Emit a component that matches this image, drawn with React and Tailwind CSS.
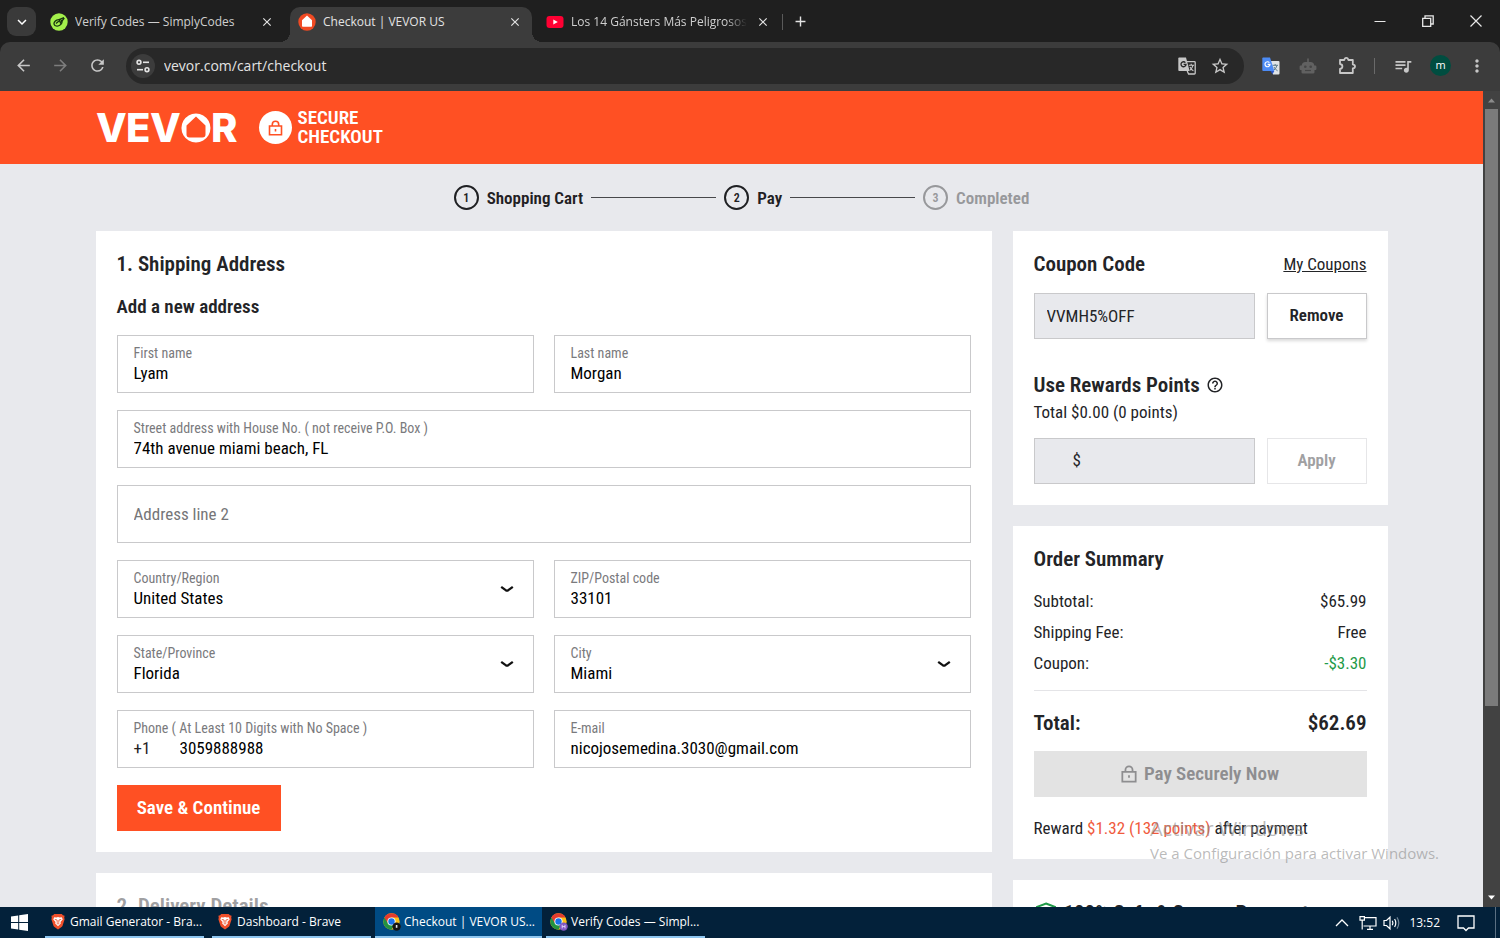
import React from "react";
import {
  MdArrowBack, MdArrowForward, MdRefresh, MdStarOutline,
  MdQueueMusic, MdMoreVert, MdClose, MdAdd, MdHelpOutline, MdKeyboardArrowDown,
} from "react-icons/md";

const UI = "font-['Open_Sans','Noto_Sans',sans-serif]";
const SHOP = "font-['Roboto_Condensed','Liberation_Sans_Narrow','Roboto',sans-serif]";

/* ---------- icons ---------- */
function SimplyIcon() {
  return (
    <svg viewBox="0 0 18 18" className="size-[18px] shrink-0" aria-hidden="true">
      <circle cx="9" cy="9" r="8.7" fill="#a3f04b" />
      <g fill="none" stroke="#17330f" strokeWidth="1.3">
        <ellipse cx="8" cy="9.8" rx="4.2" ry="3" transform="rotate(-25 8 9.8)" />
        <path d="M6 10.5 L9.5 7.5 L10.5 10 L14.3 5 M9 6.5 L14 4.6" />
      </g>
    </svg>
  );
}
function HouseIcon() {
  return (
    <svg viewBox="0 0 18 18" className="size-[18px] shrink-0" aria-hidden="true">
      <circle cx="9" cy="9" r="8.7" fill="#f04a23" />
      <path d="M9 2.6 L14 7.2 V13 Q14 13.8 13.2 13.8 H4.8 Q4 13.8 4 13 V7.2 Z" fill="#fff" />
    </svg>
  );
}
function YoutubeIcon() {
  return (
    <svg viewBox="0 0 18 18" className="size-[18px] shrink-0" aria-hidden="true">
      <rect x="0.5" y="3" width="17" height="12" rx="3" fill="#ff0033" />
      <path d="M7.3 6.4 L11.8 9 L7.3 11.6 Z" fill="#fff" />
    </svg>
  );
}
function TuneIcon() {
  return (
    <svg viewBox="0 0 16 16" className="size-4" fill="none" stroke="#e3e3e3" strokeWidth="1.6" aria-hidden="true">
      <circle cx="4" cy="4.3" r="1.9" /><path d="M8 4.3 H14" />
      <circle cx="12" cy="11.7" r="1.9" /><path d="M2 11.7 H8" />
    </svg>
  );
}
function TranslateColor() {
  return (
    <svg viewBox="0 0 18 18" className="size-[18px]" aria-hidden="true">
      <path d="M8 4 H16.5 Q17.5 4 17.5 5 V16.5 Q17.5 17.5 16.5 17.5 H11 Z" fill="#dfe3e6" />
      <path d="M10.5 8.3 H16 M13.2 7 V8.3 M15 8.5 Q14.2 11.5 11.5 13.5 M12 10 Q13 12.5 15.6 13.8" stroke="#5d7c8c" strokeWidth="1" fill="none" />
      <path d="M1.2 0.5 H8 L12.3 14 H1.2 Q0.3 14 0.3 13 V1.4 Q0.3 0.5 1.2 0.5 Z" fill="#4c8bf5" />
      <path d="M8.5 14 H12.3 L10.5 17.3 Z" fill="#2a56c6" />
      <path d="M7.4 5.6 A2.5 2.5 0 1 0 8 7.4 H5.6" stroke="#fff" strokeWidth="1.2" fill="none" />
    </svg>
  );
}
function TranslateMono() {
  return (
    <svg viewBox="0 0 18 18" className="size-[18px]" aria-hidden="true">
      <path d="M9 4.6 H16.4 Q17.2 4.6 17.2 5.4 V16.2 Q17.2 17 16.4 17 H10.6 L9.2 14" stroke="#c7c7c7" strokeWidth="1.3" fill="none" />
      <path d="M10.8 8.2 H16 M13.2 6.8 V8.2 M15 8.4 Q14.2 11.5 11.8 13.4 M12 10 Q13 12.5 15.4 13.8" stroke="#c7c7c7" strokeWidth="1.1" fill="none" />
      <path d="M1.2 0.5 H8 L11.6 14 H1.2 Q0.3 14 0.3 13 V1.4 Q0.3 0.5 1.2 0.5 Z" fill="#c7c7c7" />
      <path d="M7.4 5.6 A2.5 2.5 0 1 0 8 7.4 H5.6" stroke="#282828" strokeWidth="1.3" fill="none" />
    </svg>
  );
}
function RobotIcon() {
  return (
    <svg viewBox="0 0 18 18" className="size-[18px]" aria-hidden="true">
      <path d="M8.2 1.5 H9.8 V5 H11.5 Q15 5 15.3 8.6 H16.4 Q17.4 8.6 17.4 9.6 V12 Q17.4 13 16.4 13 H15.5 V15.2 Q15.5 16.5 14.2 16.5 H3.8 Q2.5 16.5 2.5 15.2 V13 H1.6 Q0.6 13 0.6 12 V9.6 Q0.6 8.6 1.6 8.6 H2.7 Q3 5 6.5 5 H8.2 Z" fill="#616161" />
      <circle cx="6.3" cy="9.8" r="1.3" fill="#454545" />
      <circle cx="11.7" cy="9.8" r="1.3" fill="#454545" />
      <path d="M6 13.5 H12" stroke="#454545" strokeWidth="1.2" />
    </svg>
  );
}
function PuzzleIcon() {
  return (
    <svg viewBox="0 0 20 20" className="size-5" fill="none" stroke="#c7c7c7" strokeWidth="1.8" strokeLinejoin="round" aria-hidden="true">
      <path d="M3 4 H7.3 Q7.6 1.8 9.3 1.8 Q11 1.8 11.3 4 H15.8 V8.4 Q18 8.8 18 10.4 Q18 12 15.8 12.4 V17 H3 V13 Q5.4 12.6 5.4 10.5 Q5.4 8.4 3 8 Z" />
    </svg>
  );
}
function BraveIcon() {
  return (
    <svg viewBox="0 0 16 18" className="h-[17px] w-[18px] shrink-0" aria-hidden="true">
      <path d="M4 1 H12 L13.2 2.5 L15 2.8 L14.6 5 L15 6.5 L12.8 13.5 Q12.3 14.8 8 17.4 Q3.7 14.8 3.2 13.5 L1 6.5 L1.4 5 L1 2.8 L2.8 2.5 Z" fill="#f0502b" />
      <path d="M4 4.4 L6.2 4.8 L8 4.3 L9.8 4.8 L12 4.4 L13 6.8 L10.6 9.6 L11 11 L8 14 L5 11 L5.4 9.6 L3 6.8 Z" fill="#fff" />
      <path d="M4.6 6.8 L7 7.4 L7.2 10.4 M11.4 6.8 L9 7.4 L8.8 10.4 M6.6 11.4 H9.4" stroke="#f0502b" strokeWidth="0.9" fill="none" />
    </svg>
  );
}
function ChromeIcon({ badge, letter }) {
  return (
    <svg viewBox="0 0 18 18" className="size-[18px] shrink-0" aria-hidden="true">
      <circle cx="8.5" cy="8.5" r="8.2" fill="#fbc116" />
      <path d="M8.5 8.5 L1.4 4.4 A8.2 8.2 0 0 0 8.5 16.7 L11.9 10.4 Z" fill="#229342" />
      <path d="M8.5 0.3 A8.2 8.2 0 0 1 15.6 4.4 H8.5 L5.1 10.4 L1.4 4.4 A8.2 8.2 0 0 1 8.5 0.3 Z" fill="#e33b2e" />
      <circle cx="8.5" cy="8.5" r="4.1" fill="#fff" />
      <circle cx="8.5" cy="8.5" r="3.2" fill="#1a73e8" />
      <circle cx="13.6" cy="13.6" r="4.2" fill={badge} />
      {letter ? (
        <path d="M12.2 11.8 V15.4 M15 11.8 V15.4 M12.2 13.6 H15" stroke="#e9dcff" strokeWidth="0.9" />
      ) : (
        <path d="M13.6 12 V14.8" stroke="#e8e8e8" strokeWidth="1.6" />
      )}
    </svg>
  );
}
function LockIcon({ className }) {
  return (
    <svg viewBox="0 0 18 20" className={className} fill="none" stroke="currentColor" strokeWidth="2" aria-hidden="true">
      <path d="M1.5 7.5 H16.5 V18.5 H1.5 Z M5 7.5 V5.5 A4 4 0 0 1 13 5.5 V7.5 M9 11.3 V14.3" />
    </svg>
  );
}
function VevorLogo() {
  return (
    <svg viewBox="0 0 144 32" className="h-8 w-36 overflow-visible" role="img" aria-label="VEVOR">
      <g fill="#fff" fontFamily="Inter, sans-serif" fontWeight="800" fontSize="40">
        <text x="0" y="30">V</text>
        <text x="30" y="30">E</text>
        <text x="54" y="30">V</text>
        <text x="115" y="30">R</text>
      </g>
      <path fillRule="evenodd" fill="#fff" d="M100 1.5 A14.5 14.5 0 1 1 99.9 1.5 Z M100 4.5 L90.5 13.5 V22.5 Q90.5 25.5 93.5 25.5 H106.5 Q109.5 25.5 109.5 22.5 V13.5 Z" />
    </svg>
  );
}

/* ---------- browser chrome ---------- */
function Tab({ icon, title, active, fade }) {
  return (
    <div className={`relative flex h-[35px] w-[242px] items-center gap-[7px] px-2 pb-[5px] ${active ? "rounded-t-[10px] bg-[#3c3c3c]" : ""}`}>
      {active && (
        <>
          <span className="absolute bottom-0 -left-2.5 size-2.5 bg-[radial-gradient(circle_at_0_0,transparent_10px,#3c3c3c_10px)]" />
          <span className="absolute -right-2.5 bottom-0 size-2.5 bg-[radial-gradient(circle_at_100%_0,transparent_10px,#3c3c3c_10px)]" />
        </>
      )}
      {icon}
      <span className={`flex-1 overflow-hidden text-[12px] leading-5 whitespace-nowrap ${active ? "text-[#e3e3e3]" : "text-[#cfcfcf]"} ${fade ? "[mask-image:linear-gradient(to_right,#000_88%,transparent)]" : ""}`}>
        {title}
      </span>
      <button aria-label="Close tab" className="flex size-[18px] items-center justify-center text-[#e3e3e3]"><MdClose size={14} /></button>
    </div>
  );
}

function TabStrip() {
  return (
    <div className="flex h-[42px] shrink-0 items-end bg-[#1f1f1f]">
      <button aria-label="Search tabs" className="mb-1.5 ml-[7px] flex size-[29px] items-center justify-center rounded-[9px] bg-[#3a3a3a] text-white"><MdKeyboardArrowDown size={18} /></button>
      <div className="ml-1.5 flex gap-1.5">
        <Tab icon={<SimplyIcon />} title="Verify Codes — SimplyCodes" />
        <Tab icon={<HouseIcon />} title="Checkout | VEVOR US" active />
        <Tab icon={<YoutubeIcon />} title="Los 14 Gánsters Más Peligrosos" fade />
      </div>
      <span className="mb-3 ml-0.5 h-4 w-px bg-[#5a5a5a]" />
      <button aria-label="New tab" className="mb-[11px] ml-[7px] flex size-5 items-center justify-center text-[#e3e3e3]"><MdAdd size={17} /></button>
      <div className="ml-auto flex h-full items-center text-[#e8e8e8]">
        <button aria-label="Minimize" className="flex w-12 justify-center"><svg viewBox="0 0 12 12" className="size-3" stroke="currentColor"><path d="M0.5 6.5 H11.5" /></svg></button>
        <button aria-label="Restore" className="flex w-12 justify-center"><svg viewBox="0 0 12 12" className="size-3" stroke="currentColor" fill="none" strokeWidth="1.3"><path d="M0.7 3.3 H8.7 V11.3 H0.7 Z M3 3 V0.9 H11.2 V9 H9" /></svg></button>
        <button aria-label="Close" className="flex w-12 justify-center"><svg viewBox="0 0 12 12" className="size-3" stroke="currentColor" strokeWidth="1.2"><path d="M0.5 0.5 L11.5 11.5 M11.5 0.5 L0.5 11.5" /></svg></button>
      </div>
    </div>
  );
}

function Toolbar() {
  return (
    <div className="bg-[#1f1f1f]">
      <div className="flex h-[49px] shrink-0 items-center rounded-t-[10px] bg-[#3c3c3c] pr-[13px] pb-0.5 pl-3.5 text-[#c7c7c7]">
        <div className="flex w-28 gap-[18px]">
          <button aria-label="Back"><MdArrowBack size={19} /></button>
          <button aria-label="Forward" className="text-[#7d7d7d]"><MdArrowForward size={19} /></button>
          <button aria-label="Reload"><MdRefresh size={19} /></button>
        </div>
        <div className="flex h-9 flex-1 items-center rounded-full bg-[#282828] pr-3.5 pl-[5px]">
          <button aria-label="Site information" className="flex size-6 items-center justify-center rounded-full bg-[#3c3c3c]"><TuneIcon /></button>
          <input aria-label="Address" readOnly value="vevor.com/cart/checkout" className="ml-[9px] min-w-0 flex-1 bg-transparent text-[14px] text-[#e3e3e3] outline-none" />
          <button aria-label="Translate page"><TranslateMono /></button>
          <button aria-label="Bookmark" className="ml-3.5"><MdStarOutline size={20} /></button>
        </div>
        <div className="ml-[18px] flex items-center">
          <button aria-label="Google Translate" className="mr-[19px]"><TranslateColor /></button>
          <button aria-label="Extension" className="mr-5"><RobotIcon /></button>
          <button aria-label="Extensions" className="mr-[17px]"><PuzzleIcon /></button>
          <span className="mr-[18px] h-4 w-px bg-[#6a6a6a]" />
          <button aria-label="Media" className="mr-[17px]"><MdQueueMusic size={20} /></button>
          <button aria-label="Profile" className="mr-4 flex size-[21px] items-center justify-center rounded-full bg-[#004d40] text-[11px] text-white">m</button>
          <button aria-label="Menu"><MdMoreVert size={20} /></button>
        </div>
      </div>
    </div>
  );
}

/* ---------- shop ---------- */
function Step({ n, label, muted }) {
  return (
    <div className={`flex items-center gap-2 ${muted ? "text-[#97989b]" : "text-[#1f2023]"}`}>
      <span className="flex size-[25px] items-center justify-center rounded-full border-2 border-current text-[12px] font-semibold">{n}</span>
      <span className="text-[17px] leading-[22px] font-semibold">{label}</span>
    </div>
  );
}

function Field({ id, label, value, prefix, wide }) {
  return (
    <div className={`flex h-[58px] flex-col justify-center border border-[#c9c9cb] px-4 ${wide ? "col-span-2" : ""}`}>
      <label htmlFor={id} className="text-[14px] leading-[18px] text-[#7a7a7d]">{label}</label>
      <div className="flex text-[17px] leading-[23px]">
        {prefix && <span className="w-[46px] text-[#1f2023]">{prefix}</span>}
        <input id={id} defaultValue={value} className="min-w-0 flex-1 bg-transparent text-black outline-none" />
      </div>
    </div>
  );
}

function SelectField({ id, label, value }) {
  return (
    <div className="grid h-[58px] grid-cols-[1fr_auto] items-center border border-[#c9c9cb] pr-[18px] pl-4">
      <div className="flex flex-col">
        <label htmlFor={id} className="text-[14px] leading-[18px] text-[#7a7a7d]">{label}</label>
        <select id={id} defaultValue={value} className="appearance-none bg-transparent text-[17px] leading-[23px] text-black outline-none"><option>{value}</option></select>
      </div>
      <svg viewBox="0 0 16 16" className="size-4" fill="none" stroke="#111" strokeWidth="2.3" aria-hidden="true"><path d="M2.2 5.8 L7 9.4 Q8 10 9 9.4 L13.8 5.8" /></svg>
    </div>
  );
}

function SummaryRow({ label, value, className }) {
  return (
    <div className="flex justify-between text-[17px] leading-6">
      <span>{label}</span>
      <span className={className}>{value}</span>
    </div>
  );
}

function ShippingCard() {
  return (
    <section className="bg-white p-[21px]">
      <h2 className="text-[21px] leading-6 font-semibold">1. Shipping Address</h2>
      <h3 className="mt-[17px] text-[19px] leading-7 font-semibold">Add a new address</h3>
      <form className="mt-3.5" onSubmit={(e) => e.preventDefault()}>
        <div className="grid grid-cols-2 gap-x-5 gap-y-[17px]">
          <Field id="first" label="First name" value="Lyam" />
          <Field id="last" label="Last name" value="Morgan" />
          <Field id="street" label="Street address with House No. ( not receive P.O. Box )" value="74th avenue miami beach, FL" wide />
          <input aria-label="Address line 2" placeholder="Address line 2" className="col-span-2 h-[58px] border border-[#c9c9cb] px-4 text-[17px] outline-none placeholder:text-[#757578]" />
          <SelectField id="country" label="Country/Region" value="United States" />
          <Field id="zip" label="ZIP/Postal code" value="33101" />
          <SelectField id="state" label="State/Province" value="Florida" />
          <SelectField id="city" label="City" value="Miami" />
          <Field id="phone" label="Phone ( At Least 10 Digits with No Space )" value="3059888988" prefix="+1" />
          <Field id="email" label="E-mail" value="nicojosemedina.3030@gmail.com" />
        </div>
        <button className="mt-[17px] h-[46px] w-[164px] bg-[#ff5023] text-[19px] leading-6 font-semibold text-white">Save &amp; Continue</button>
      </form>
    </section>
  );
}

function CouponCard() {
  return (
    <section className="bg-white p-[21px]">
      <div className="flex items-center justify-between leading-6">
        <h2 className="text-[21px] font-semibold">Coupon Code</h2>
        <a href="#coupons" className="text-[17px] leading-[22px] underline">My Coupons</a>
      </div>
      <div className="mt-[17px] flex gap-3">
        <input aria-label="Coupon code" defaultValue="VVMH5%OFF" className="h-[46px] min-w-0 flex-1 border border-[#c9c9cb] bg-[#e8e9ed] px-3 text-[17px] outline-none" />
        <button className="w-[100px] border border-[#c9c9cb] text-[17px] font-semibold shadow-[0_2px_3px_rgba(0,0,0,0.15)]">Remove</button>
      </div>
      <div className="mt-[34px] flex items-center gap-1.5">
        <h2 className="text-[21px] leading-6 font-semibold">Use Rewards Points</h2>
        <MdHelpOutline size={18} />
      </div>
      <p className="mt-[3px] text-[17px] leading-6">Total $0.00 (0 points)</p>
      <div className="mt-3.5 flex gap-3">
        <label className="flex h-[46px] min-w-0 flex-1 items-center border border-[#c9c9cb] bg-[#e8e9ed] pl-[38px] text-[17px]">
          $<input aria-label="Reward amount" className="min-w-0 flex-1 bg-transparent outline-none" />
        </label>
        <button disabled className="w-[100px] border border-[#e6e6e8] text-[17px] font-semibold text-[#a0a0a2]">Apply</button>
      </div>
    </section>
  );
}

function OrderCard() {
  return (
    <section className="bg-white p-[21px] pb-[19px]">
      <h2 className="text-[21px] leading-6 font-semibold">Order Summary</h2>
      <div className="mt-[18px] flex flex-col gap-[7px] border-b border-[#e4e4e7] pb-[15px]">
        <SummaryRow label="Subtotal:" value="$65.99" />
        <SummaryRow label="Shipping Fee:" value="Free" />
        <SummaryRow label="Coupon:" value="-$3.30" className="text-[#1f9a48]" />
      </div>
      <div className="mt-5 flex justify-between text-[21px] leading-6 font-semibold">
        <span>Total:</span>
        <span>$62.69</span>
      </div>
      <button disabled className="mt-4 flex h-[46px] w-full items-center justify-center gap-[7px] bg-[#e3e3e3] text-[19px] leading-6 font-semibold text-[#8e8e90]">
        <LockIcon className="h-[18px] w-4" />Pay Securely Now
      </button>
      <p className="mt-[19px] text-[17px] leading-6">Reward <span className="text-[#f05a3c]">$1.32 (132 points)</span> after payment</p>
    </section>
  );
}

function Shop() {
  return (
    <main className={`min-w-0 flex-1 overflow-hidden bg-[#e8e9ed] text-[#232427] ${SHOP}`}>
      <header className="flex h-[73px] justify-center bg-[#ff5023]">
        <div className="flex w-full max-w-[1292px] items-center">
          <VevorLogo />
          <span className="ml-[19px] flex size-[33px] items-center justify-center rounded-full bg-white text-[#ff5023]"><LockIcon className="h-4 w-[15px]" /></span>
          <p className="ml-1.5 pb-0.5 text-[19px] leading-[19px] font-semibold text-white">SECURE<br />CHECKOUT</p>
        </div>
      </header>
      <nav className="flex h-[67px] items-center justify-center gap-2">
        <Step n="1" label="Shopping Cart" />
        <span className="h-px w-[125px] bg-[#47484b]" />
        <Step n="2" label="Pay" />
        <span className="h-px w-[125px] bg-[#47484b]" />
        <Step n="3" label="Completed" muted />
      </nav>
      <div className="mx-auto grid max-w-[1292px] grid-cols-[minmax(0,1fr)_375px] gap-[21px]">
        <div className="flex flex-col gap-[21px]">
          <ShippingCard />
          <section className="bg-white p-[21px]"><h2 className="text-[21px] leading-6 font-semibold text-[#a0a0a2]">2. Delivery Details</h2></section>
        </div>
        <div className="flex flex-col gap-[21px]">
          <CouponCard />
          <OrderCard />
          <section className="flex items-center gap-1.5 bg-white p-[21px]">
            <svg viewBox="0 0 24 24" className="size-6" fill="none" stroke="#1f9a48" strokeWidth="2" aria-hidden="true"><path d="M12 2.5 L21 6 V12 Q21 19 12 22.5 Q3 19 3 12 V6 Z M8 12 L11 15 L16 9" /></svg>
            <h2 className="text-[21px] leading-6 font-semibold">100% Safe &amp; Secure Payments</h2>
          </section>
        </div>
      </div>
    </main>
  );
}

function Scrollbar() {
  return (
    <div className="flex w-[17px] shrink-0 flex-col items-center bg-[#424242]" aria-hidden="true">
      <svg viewBox="0 0 17 18" className="h-[18px] w-[17px]"><path d="M5 11.5 L8.5 7.5 L12 11.5 Z" fill="#8b8b8b" /></svg>
      <div className="w-[13px] flex-[597] bg-[#7b7b7b]" />
      <div className="flex-[183]" />
      <svg viewBox="0 0 17 18" className="h-[18px] w-[17px]"><path d="M5 6.5 H12 L8.5 10.5 Z" fill="#fff" /></svg>
    </div>
  );
}

/* ---------- taskbar ---------- */
function Task({ icon, title, active }) {
  return (
    <button className={`flex h-full w-[167px] flex-col items-stretch text-left text-white ${active ? "bg-[#004b84]" : "px-1"}`}>
      <span className={`flex flex-1 items-center gap-[3px] ${active ? "px-2" : "px-1"}`}>
        {icon}
        <span className="text-[12px] leading-5 whitespace-nowrap">{title}</span>
      </span>
      <span className="h-0.5 bg-[#8ec6f0]" />
    </button>
  );
}

function Taskbar() {
  return (
    <footer className="flex h-[31px] shrink-0 items-center bg-[#03213a] text-white">
      <button aria-label="Start" className="flex w-[41px] justify-center pr-[3px]">
        <svg viewBox="0 0 17 17" className="size-[17px]" fill="#fff"><path d="M0 2.4 L7.2 1.4 V8 H0 Z M8.2 1.2 L17 0 V8 H8.2 Z M0 9 H7.2 V15.6 L0 14.6 Z M8.2 9 H17 V17 L8.2 15.8 Z" /></svg>
      </button>
      <Task icon={<BraveIcon />} title="Gmail Generator - Bra..." />
      <Task icon={<BraveIcon />} title="Dashboard - Brave" />
      <Task icon={<ChromeIcon badge="#151515" />} title="Checkout | VEVOR US..." active />
      <Task icon={<ChromeIcon badge="#7e57c2" letter />} title="Verify Codes — Simpl..." />
      <div className="ml-auto flex h-full items-center">
        <svg viewBox="0 0 14 14" className="size-3.5" fill="none" stroke="#fff" strokeWidth="1.3" aria-hidden="true"><path d="M1 10 L7 4 L13 10" /></svg>
        <svg viewBox="0 0 18 16" className="ml-2.5 h-4 w-[18px]" fill="none" stroke="#fff" strokeWidth="1.2" aria-hidden="true"><path d="M6 2.6 H17 V11 H4.5 M11 11 V14.4 M8 14.4 H14 M1 1.6 H5.4 V5.2 H1 Z M3.2 5.2 V14.5" /></svg>
        <svg viewBox="0 0 18 16" className="ml-1.5 h-4 w-[18px]" fill="none" stroke="#fff" strokeWidth="1.2" aria-hidden="true"><path d="M1 5.5 H3.5 L7 2.2 V13.8 L3.5 10.5 H1 Z M9.3 5.8 Q10.6 8 9.3 10.2 M11.6 4 Q14 8 11.6 12" /><path d="M14 2.4 Q17.6 8 14 13.6" stroke="#6f8496" /></svg>
        <span className="ml-2 text-[12px]">13:52</span>
        <svg viewBox="0 0 18 18" className="ml-[17px] size-[18px]" fill="none" stroke="#fff" strokeWidth="1.3" aria-hidden="true"><path d="M1 2 H17 V14 H11.5 L9 16.5 L6.5 14 H1 Z" /></svg>
        <span className="mr-1 ml-5 h-full w-px bg-[#5a6f82]" />
      </div>
    </footer>
  );
}

export default function App() {
  return (
    <div className={`relative flex h-screen flex-col overflow-hidden ${UI}`}>
      <TabStrip />
      <Toolbar />
      <div className="flex min-h-0 flex-1">
        <Shop />
        <Scrollbar />
      </div>
      <Taskbar />
      <div className="pointer-events-none absolute right-[61px] bottom-[73px] text-[#8c8c8c]/60">
        <p className="text-[20px] leading-6">Activar Windows</p>
        <p className="text-[15px] leading-6">Ve a Configuración para activar Windows.</p>
      </div>
    </div>
  );
}
